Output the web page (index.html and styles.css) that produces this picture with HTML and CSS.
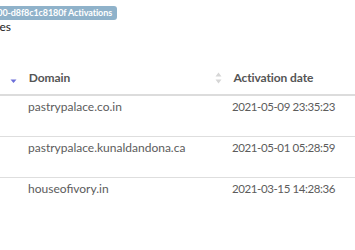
FILE: index.html
```html
<!DOCTYPE html>
<html lang="en">
<head>
  <meta charset="UTF-8">
  <meta name="viewport" content="width=device-width, initial-scale=1.0">
  <title>Activations</title>
  <link rel="stylesheet" href="styles.css">
</head>
<body>
  <div class="head">
    <div class="clip badge-clip">
      <span class="badge">5e1f0a00-d8f8c1c8180f Activations</span>
    </div>
    <div class="clip title-clip">
      <span class="title">Activations for licences</span>
    </div>
  </div>

  <table class="table">
    <colgroup>
      <col class="col-domain">
      <col class="col-date">
    </colgroup>
    <thead>
      <tr>
        <th class="th-domain">
          <span class="sort">
            <svg width="7" height="12" viewBox="0 0 7 12"><path d="M0.5 7.5h6l-3 3.5z" fill="#6c6fd9"/></svg>
          </span>
          Domain
        </th>
        <th class="th-date">
          <span class="sort">
            <svg width="7" height="12" viewBox="0 0 7 12"><path d="M0.5 4.5h6l-3-4z" fill="#d6d6d6"/><path d="M0.5 7.5h6l-3 4z" fill="#d6d6d6"/></svg>
          </span>
          Activation date
        </th>
      </tr>
    </thead>
    <tbody>
      <tr>
        <td class="td-domain">pastrypalace.co.in</td>
        <td class="td-date">2021-05-09 23:35:23</td>
      </tr>
      <tr>
        <td class="td-domain">pastrypalace.kunaldandona.ca</td>
        <td class="td-date">2021-05-01 05:28:59</td>
      </tr>
      <tr>
        <td class="td-domain">houseofivory.in</td>
        <td class="td-date">2021-03-15 14:28:36</td>
      </tr>
    </tbody>
  </table>
</body>
</html>
```

FILE: styles.css
```css
body {
  margin: 0;
  padding: 6px 0 0;
  font-family: Lato, "Open Sans", sans-serif;
  background: #fff;
  color: #333;
}
.head {
  display: flex;
  flex-direction: column;
}
.clip {
  display: flex;
  justify-content: flex-end;
  overflow: hidden;
  white-space: nowrap;
}
.badge-clip {
  width: 117px;
}
.badge {
  display: inline-block;
  background: #8fb2ca;
  color: #fff;
  font-size: 9px;
  font-weight: bold;
  line-height: 14px;
  letter-spacing: -0.1px;
  padding: 0 5px;
  border-radius: 3px;
}
.title-clip {
  width: 11px;
}
.title {
  font-size: 12px;
  line-height: 14px;
  color: #222;
}
.table {
  width: 100%;
  margin-top: 28px;
  border-collapse: collapse;
  table-layout: fixed;
  font-size: 12px;
  line-height: 16px;
}
.col-domain { width: 212px; }
th {
  text-align: left;
  font-weight: bold;
  color: #555;
  padding: 8px 0;
  border-bottom: 2px solid #dcdcdc;
  white-space: nowrap;
  letter-spacing: -0.1px;
}
.sort {
  display: inline-block;
  width: 7px;
  height: 12px;
  vertical-align: -2px;
  margin-right: 9px;
}
.sort svg { display: block; }
.th-domain { padding-left: 10px; }
.th-date { padding-left: 3px; }
td {
  color: #5c5c5c;
  padding: 3px 0 21px;
  border-bottom: 1px solid #dedede;
  white-space: nowrap;
}
tbody tr:last-child td { border-bottom: none; }
.td-domain { padding-left: 28px; }
.td-date {
  padding-left: 20px;
  font-size: 11.5px;
  letter-spacing: -0.4px;
}
```
